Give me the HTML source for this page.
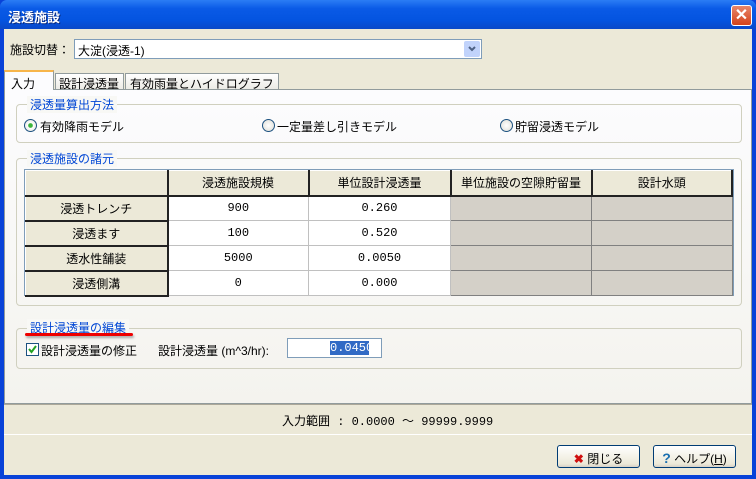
<!DOCTYPE html>
<html><head><meta charset="utf-8"><style>
*{margin:0;padding:0;box-sizing:border-box}
body{width:756px;height:479px;overflow:hidden;font-family:"Liberation Sans","Noto Sans CJK JP",sans-serif;font-size:12px;color:#000;position:relative;background:#0842d8}
.a{position:absolute}
.win{left:4px;top:29px;width:748px;height:446px;background:#ece9d8}
.title{left:0;top:0;width:756px;height:29px;background:linear-gradient(#2b7df5,#0a5ae6 30%,#0454e0 70%,#0a49c8);border-radius:7px 7px 0 0;color:#fff;font-weight:bold;font-size:13px;padding:7px 0 0 8px;text-shadow:1px 1px #0a2b80}
.grp{border:1px solid #d0d0bf;border-radius:4px}
.gt{color:#0046d5;background:#f8f8f5;padding:0 3px;font-size:12px}
table{border-collapse:collapse;position:absolute}
td{border:1px solid #c0c0c0;height:25px;font-size:12px;text-align:center;background:#fff;font-family:"Liberation Mono","Noto Sans CJK JP",monospace}
td.h{background:#ece9d8;border-right:2px solid #222;border-bottom:2px solid #222;border-top:1px solid #fff;border-left:1px solid #fff;font-family:"Liberation Sans","Noto Sans CJK JP",sans-serif}
td.g{background:#d4d0c8;border:1px solid #fff;border-right:1px solid #808080;border-bottom:1px solid #808080}
.radio{width:13px;height:13px;border-radius:50%;border:1px solid #1c5180;background:radial-gradient(#fff,#dcdcd4)}
.btn{border:1px solid #003c74;border-radius:3px;background:linear-gradient(#fff,#ece9d8 85%,#d6d0c5);text-align:center;font-size:12px;padding-top:4px}
</style></head><body>
<div class="a title">浸透施設</div>
<div class="a" style="left:731px;top:5px;width:21px;height:21px;border:1px solid #fff;border-radius:3px;background:linear-gradient(#e8866b,#d4421a);color:#fff;font-size:16px;font-weight:bold;text-align:center;line-height:19px">✕</div>
<div class="a win"></div>
<div class="a" style="left:10px;top:41px">施設切替：</div>
<div class="a" style="left:74px;top:39px;width:408px;height:20px;border:1px solid #7f9db9;background:#fff;padding:2px 3px">大淀(浸透-1)</div>
<div class="a" style="left:464px;top:41px;width:16px;height:16px;background:#c1d3fb;border-radius:2px"><svg width="16" height="16"><path d="M5 6l3 3 3-3" stroke="#4d6185" stroke-width="2" fill="none"/></svg></div>
<!-- tabs -->
<div class="a" style="left:4px;top:89px;width:748px;height:315px;border:1px solid #919b9c;background:linear-gradient(#fcfcfe,#f4f3ee)"></div>
<div class="a" style="left:4px;top:70px;width:50px;height:20px;background:#fcfcfe;border:1px solid #919b9c;border-bottom:none;border-top:2px solid #f7b54a;padding:3px 0 0 6px;font-size:12px">入力</div>
<div class="a" style="left:55px;top:73px;width:69px;height:17px;background:linear-gradient(#fff,#ecebe5);border:1px solid #919b9c;padding:1px 0 0 3px">設計浸透量</div>
<div class="a" style="left:125px;top:73px;width:154px;height:17px;background:linear-gradient(#fff,#ecebe5);border:1px solid #919b9c;padding:1px 0 0 4px">有効雨量とハイドログラフ</div>
<!-- group1 -->
<div class="a grp" style="left:16px;top:104px;width:726px;height:39px"></div>
<div class="a gt" style="left:27px;top:96px">浸透量算出方法</div>
<div class="a radio" style="left:24px;top:119px;background:radial-gradient(#3cb43c 25%,#fff 35%,#dcdcd4)"></div>
<div class="a" style="left:40px;top:118px">有効降雨モデル</div>
<div class="a radio" style="left:262px;top:119px"></div>
<div class="a" style="left:277px;top:118px">一定量差し引きモデル</div>
<div class="a radio" style="left:500px;top:119px"></div>
<div class="a" style="left:515px;top:118px">貯留浸透モデル</div>
<!-- group2 -->
<div class="a grp" style="left:16px;top:158px;width:726px;height:148px"></div>
<div class="a gt" style="left:27px;top:150px">浸透施設の諸元</div>
<div class="a" style="left:24px;top:169px;width:710px;height:127px;border:1px solid #7f9db9;background:#fff"></div>
<table style="left:25px;top:170px;width:708px">
<tr><td class="h" style="width:142px;height:24px"></td><td class="h" style="width:141px">浸透施設規模</td><td class="h" style="width:142px">単位設計浸透量</td><td class="h" style="width:141px">単位施設の空隙貯留量</td><td class="h">設計水頭</td></tr>
<tr><td class="h">浸透トレンチ</td><td>900</td><td>0.260</td><td class="g"></td><td class="g"></td></tr>
<tr><td class="h">浸透ます</td><td>100</td><td>0.520</td><td class="g"></td><td class="g"></td></tr>
<tr><td class="h">透水性舗装</td><td>5000</td><td>0.0050</td><td class="g"></td><td class="g"></td></tr>
<tr><td class="h" style="height:24px">浸透側溝</td><td>0</td><td>0.000</td><td class="g"></td><td class="g"></td></tr>
</table>
<!-- group3 -->
<div class="a grp" style="left:16px;top:328px;width:726px;height:41px"></div>
<div class="a gt" style="left:27px;top:319px">設計浸透量の編集</div>
<div class="a" style="left:25px;top:333px;width:108px;height:3px;background:#e00;border-radius:2px;box-shadow:1px 2px 2px #aaa"></div>
<div class="a" style="left:26px;top:343px;width:13px;height:13px;border:1px solid #1c5180;background:#fff"><svg width="11" height="11"><path d="M2 5l2.5 3L9 2" stroke="#21a121" stroke-width="2" fill="none"/></svg></div>
<div class="a" style="left:41px;top:342px;font-size:12px">設計浸透量の修正</div>
<div class="a" style="left:158px;top:342px">設計浸透量 (m^3/hr):</div>
<div class="a" style="left:287px;top:338px;width:95px;height:20px;border:1px solid #7f9db9;background:#fff"></div>
<div class="a" style="left:330px;top:341px;height:14px;width:39px;background:#316ac5;color:#fff;font-family:'Liberation Mono',monospace;font-size:12px;line-height:14px;text-align:right;overflow:hidden;white-space:nowrap">0.0450</div>
<!-- status -->
<div class="a" style="left:4px;top:404px;width:748px;height:1px;background:#aca899"></div>
<div class="a" style="left:282px;top:412px;font-family:'Liberation Mono','Noto Sans CJK JP',monospace;font-size:12px">入力範囲 : 0.0000 ～ 99999.9999</div>
<div class="a" style="left:4px;top:434px;width:748px;height:1px;background:#fff"></div>
<div class="a btn" style="left:557px;top:445px;width:83px;height:23px"><span style="color:#d01010;font-weight:bold">✖</span> 閉じる</div>
<div class="a btn" style="left:653px;top:445px;width:83px;height:23px"><span style="color:#1a6fb0;font-weight:bold;font-size:14px">?</span> ヘルプ(<u>H</u>)</div>
</body></html>
